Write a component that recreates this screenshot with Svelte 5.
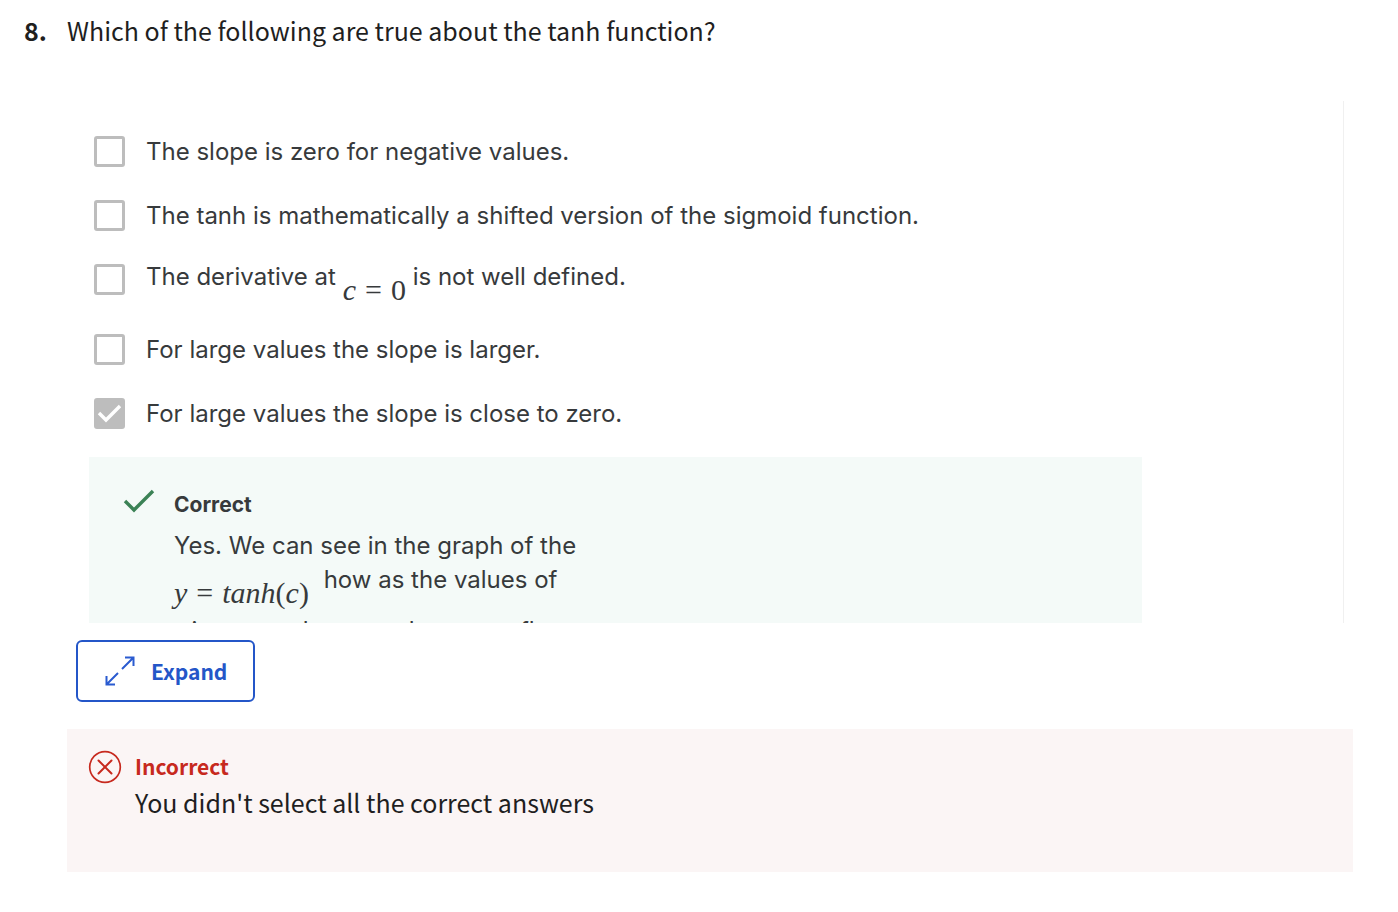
<script>
  const options = [
    { id: 'negative', before: 'The slope is zero for negative values.', checked: false },
    { id: 'shifted', before: 'The tanh is mathematically a shifted version of the sigmoid function.', checked: false },
    { id: 'derivative', before: 'The derivative at', math: true, after: 'is not well defined.', checked: false },
    { id: 'larger', before: 'For large values the slope is larger.', checked: false },
    { id: 'zero', before: 'For large values the slope is close to zero.', checked: true }
  ];
</script>

<main>
  <header>
    <span class="number">8.</span>
    <h1>Which of the following are true about the tanh function?</h1>
  </header>

  <section class="answers">
    <ul>
      {#each options as option}
        <li class:tall={option.math}>
          <input type="checkbox" id={option.id} checked={option.checked} />
          <label for={option.id}>
            {option.before}
            {#if option.math}
              <span class="math"><i>c</i><span class="equals">=</span>0</span>
              {option.after}
            {/if}
          </label>
        </li>
      {/each}
    </ul>

    <div class="correct">
      <svg width="32" height="26" viewBox="0 0 32 26" fill="none" stroke="#3b8256" stroke-width="3.4" aria-hidden="true">
        <path d="M2 14 L11 23 L30 4" />
      </svg>
      <div>
        <h2>Correct</h2>
        <p>Yes. We can see in the graph of the</p>
        <p class="formula">
          <span class="math"><i>y</i><span class="equals">=</span><i>tanh</i>(<i>c</i>)</span>
          how as the values of
        </p>
        <p><i class="variable">c</i> increase the curve becomes flatter.</p>
      </div>
    </div>
  </section>

  <button type="button">
    <svg width="30" height="30" viewBox="0 0 30 30" fill="none" stroke="#2a5bd0" stroke-width="2" aria-hidden="true">
      <path d="M17 13 L28.5 1.5 M20 1.5 H28.5 V10 M13 17 L1.5 28.5 M1.5 20 V28.5 H10" />
    </svg>
    Expand
  </button>

  <section class="incorrect">
    <svg width="34" height="34" viewBox="0 0 34 34" fill="none" stroke="#c7291e" aria-hidden="true">
      <circle cx="17" cy="17" r="15.3" stroke-width="1.7" />
      <path d="M10.5 10.5 L23.5 23.5 M23.5 10.5 L10.5 23.5" stroke-width="2" stroke-linecap="round" />
    </svg>
    <div>
      <h2>Incorrect</h2>
      <p>You didn't select all the correct answers</p>
    </div>
  </section>
</main>

<style>
  :global(body) {
    margin: 0;
    background: #fff;
  }

  main {
    padding: 10px 45px 40px 67px;
    color: #1f1f1f;
    font-family: "Noto Sans CJK SC", "Noto Sans", sans-serif;
  }

  h1, h2, p, ul {
    margin: 0;
    padding: 0;
    font-weight: 400;
  }

  header {
    display: flex;
    margin-left: -43px;
    font-size: 25px;
    line-height: 40px;
  }

  .number {
    width: 43px;
    flex: none;
    font-weight: 700;
  }

  h1 {
    font-size: 25px;
  }

  .answers {
    height: 522px;
    margin: 51px 9px 0 0;
    padding: 0 201px 0 22px;
    box-sizing: border-box;
    overflow: hidden;
    border-right: 1px solid #f0f0f0;
    color: #373a3c;
    font-family: Inter, sans-serif;
    font-size: 24px;
  }

  ul {
    padding: 18px 0 12px 5px;
    list-style: none;
  }

  li {
    display: flex;
    align-items: center;
    gap: 21px;
    height: 64px;
  }

  li.tall {
    height: 70px;
    align-items: flex-start;
  }

  li.tall input {
    margin-top: 17px;
  }

  li.tall label {
    margin-top: 12px;
  }

  label {
    padding-top: 2px;
    line-height: 32px;
  }

  input {
    appearance: none;
    flex: none;
    width: 31px;
    height: 31px;
    margin: 0;
    box-sizing: border-box;
    border: 3px solid #bdbdbd;
    border-radius: 3px;
    background: #fff;
  }

  input:checked {
    background: #bdbdbd url("data:image/svg+xml,%3Csvg xmlns='http://www.w3.org/2000/svg' viewBox='0 0 25 25' fill='none' stroke='white' stroke-width='3.4'%3E%3Cpath d='M2 12 L9 19 L23 5'/%3E%3C/svg%3E") center / 25px 25px no-repeat;
  }

  .math {
    display: inline-block;
    vertical-align: -15px;
    line-height: 24px;
    font-family: "Liberation Serif", serif;
    font-size: 30px;
  }

  .equals {
    margin: 0 9px;
  }

  .variable {
    font-family: "Liberation Serif", serif;
  }

  .correct {
    display: flex;
    gap: 19px;
    min-height: 200px;
    padding: 30px 34px;
    background: #f4faf8;
  }

  .correct svg, .incorrect svg {
    flex: none;
  }

  .correct h2 {
    margin-bottom: 8px;
    padding-top: 2px;
    font-size: 21px;
    line-height: 32px;
    font-weight: 700;
  }

  .correct p {
    line-height: 34px;
  }

  .correct .formula {
    padding-bottom: 9px;
  }

  .formula .math {
    margin-right: 8px;
  }

  button {
    display: flex;
    align-items: center;
    gap: 16px;
    height: 62px;
    margin: 17px 0 0 9px;
    padding: 0 26px 0 27px;
    border: 2px solid #2456c8;
    border-radius: 6px;
    background: #fff;
    color: #2456c8;
    font: 700 21px "Noto Sans CJK SC", "Noto Sans", sans-serif;
  }

  .incorrect {
    display: flex;
    gap: 13px;
    min-height: 143px;
    box-sizing: border-box;
    margin-top: 27px;
    padding: 21px;
    background: #fbf5f5;
  }

  .incorrect h2 {
    color: #c7291e;
    font-size: 21px;
    line-height: 32px;
    font-weight: 700;
  }

  .incorrect p {
    font-size: 25px;
    line-height: 40px;
  }
</style>
